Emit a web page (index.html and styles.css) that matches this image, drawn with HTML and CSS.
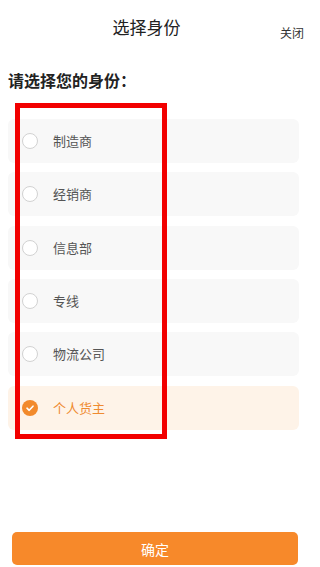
FILE: index.html
```html
<!DOCTYPE html>
<html lang="zh-CN">
<head>
<meta charset="utf-8">
<meta name="viewport" content="width=device-width, initial-scale=1">
<title>选择身份</title>
<link rel="stylesheet" href="styles.css">
</head>
<body>
<div class="page">
  <header class="header">
    <div class="title">选择身份</div>
    <div class="close">关闭</div>
  </header>
  <div class="heading">请选择您的身份：</div>
  <div class="list">
    <div class="row"><span class="radio"></span><span class="label">制造商</span></div>
    <div class="row"><span class="radio"></span><span class="label">经销商</span></div>
    <div class="row"><span class="radio"></span><span class="label">信息部</span></div>
    <div class="row"><span class="radio"></span><span class="label">专线</span></div>
    <div class="row"><span class="radio"></span><span class="label">物流公司</span></div>
    <div class="row selected"><span class="radio"><svg viewBox="0 0 16 16" width="16" height="16"><path d="M5 8.2 L7.2 10.3 L11 6.2" fill="none" stroke="#fff" stroke-width="1.6" stroke-linecap="round" stroke-linejoin="round"/></svg></span><span class="label">个人货主</span></div>
  </div>
  <div class="footer">
    <button class="confirm">确定</button>
  </div>
  <div class="highlight"></div>
</div>
</body>
</html>
```
FILE: styles.css
```css
html, body {
  margin: 0;
  padding: 0;
  background: #fff;
}
body {
  font-family: "Noto Sans CJK SC", "Noto Sans", sans-serif;
}
.page {
  position: relative;
  width: 308px;
  height: 567px;
  display: flex;
  flex-direction: column;
  box-sizing: border-box;
  overflow: hidden;
}
.header {
  display: flex;
  align-items: flex-start;
  height: 55px;
  padding-right: 4px;
}
.title {
  flex: 1;
  text-align: center;
  padding-left: 13px;
  margin-top: 15px;
  font-size: 17px;
  line-height: 24px;
  color: #222;
}
.close {
  margin-top: 25px;
  font-size: 12px;
  line-height: 16px;
  color: #333;
}
.heading {
  margin-top: 14px;
  padding-left: 8px;
  font-size: 16px;
  line-height: 22px;
  font-weight: bold;
  color: #222;
}
.list {
  margin-top: 28px;
  padding: 0 9px 0 8px;
  display: flex;
  flex-direction: column;
  gap: 9.33px;
}
.row {
  height: 44px;
  border-radius: 6px;
  background: #f8f8f8;
  display: flex;
  align-items: center;
  padding-left: 14px;
  gap: 15px;
}
.radio {
  width: 16px;
  height: 16px;
  box-sizing: border-box;
  border: 1px solid #d2d2d2;
  border-radius: 50%;
  background: #fff;
  display: flex;
}
.label {
  font-size: 13px;
  line-height: 18px;
  color: #555;
}
.row.selected {
  background: #fef3e8;
}
.row.selected .radio {
  border: none;
  background: #f28a2c;
}
.row.selected .label {
  color: #ef8a30;
}
.footer {
  margin-top: auto;
  padding: 0 10px 2px 12px;
}
.confirm {
  display: block;
  width: 100%;
  height: 33px;
  border: none;
  border-radius: 5px;
  background: #f7892a;
  color: #fff;
  font-family: inherit;
  font-size: 14px;
  padding: 0;
}
.highlight {
  position: absolute;
  left: 15px;
  top: 103px;
  width: 152px;
  height: 336px;
  box-sizing: border-box;
  border: 5px solid #f20000;
}
```
